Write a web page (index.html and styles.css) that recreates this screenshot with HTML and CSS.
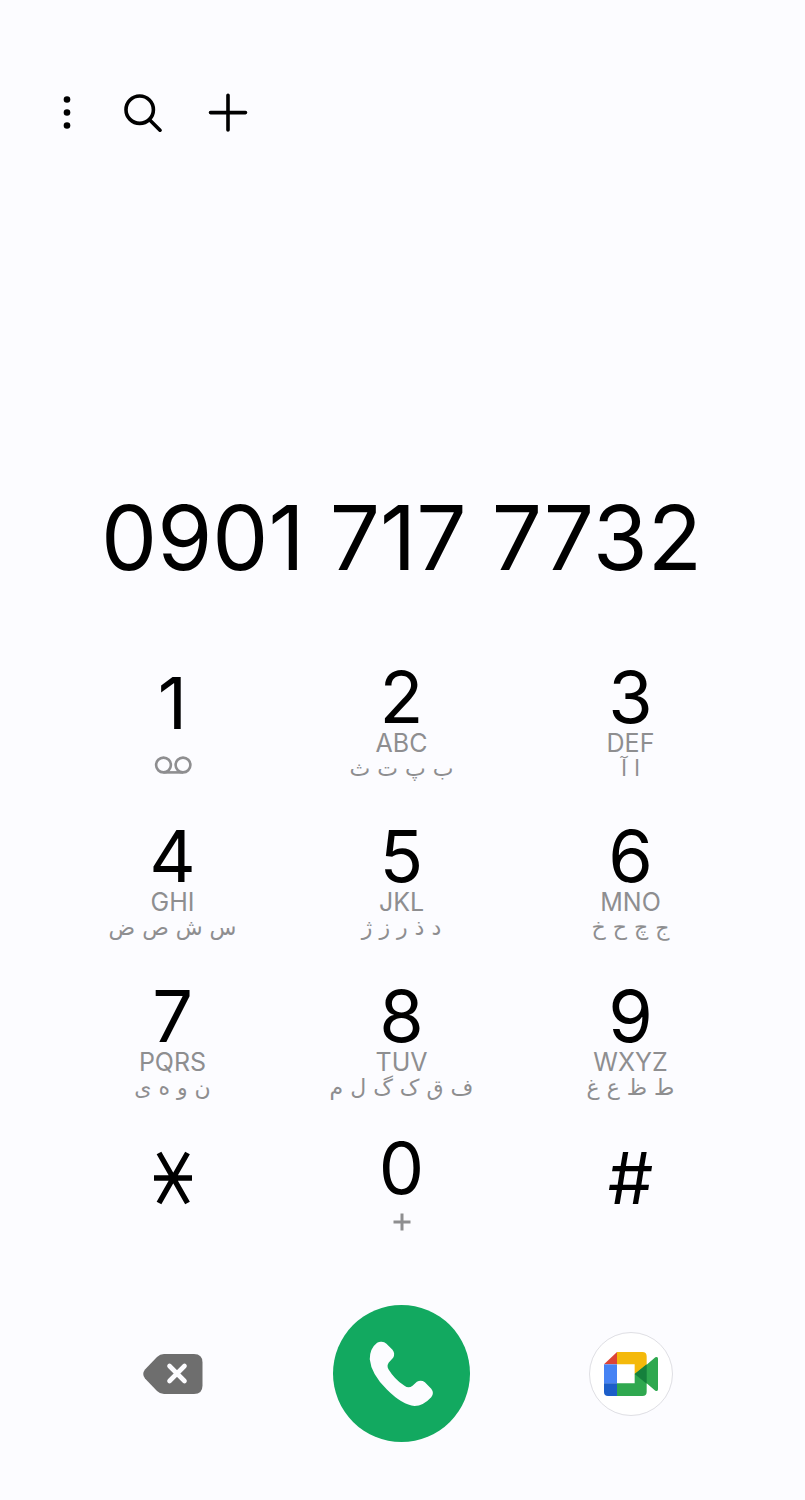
FILE: index.html
```html
<!DOCTYPE html>
<html lang="en">
<head>
    <meta charset="UTF-8">
    <meta name="viewport" content="width=device-width, initial-scale=1">
    <title>Phone</title>
    <link rel="stylesheet" href="styles.css">
</head>
<body>

<header class="toolbar">
    <button class="tool tool-more" type="button" aria-label="More options">
        <svg width="18" height="40" viewBox="0 0 18 40">
            <circle cx="9" cy="6.5" r="3.3"/>
            <circle cx="9" cy="19.5" r="3.3"/>
            <circle cx="9" cy="32.5" r="3.3"/>
        </svg>
    </button>
    <button class="tool" type="button" aria-label="Search">
        <svg class="line" width="40" height="40" viewBox="0 0 40 40">
            <circle cx="17.7" cy="16.7" r="13.7"/>
            <path d="M27.5 26.700 L38 37.200"/>
        </svg>
    </button>
    <button class="tool" type="button" aria-label="Add to contacts">
        <svg class="line" width="40" height="40" viewBox="0 0 40 40">
            <path d="M2.500 19.600 H37.500 M20 2.200 V37"/>
        </svg>
    </button>
</header>

<main>
    <input class="number" type="tel" aria-label="Phone number" value="0901 717 7732" spellcheck="false" autocomplete="off">

    <div class="keypad">
        <button class="key key-one" type="button">
            <span class="digit">1</span>
            <svg class="voicemail" width="38" height="18" viewBox="0 0 38 18" aria-label="Voicemail">
                <circle cx="9.5" cy="9" r="7.4"/>
                <circle cx="29" cy="9" r="7.4"/>
                <path d="M9.5 16.4 H29"/>
            </svg>
        </button>
        <button class="key" type="button">
            <span class="digit">2</span>
            <span class="latin">ABC</span>
            <span class="persian" lang="fa" dir="rtl">ب پ ت ث</span>
        </button>
        <button class="key" type="button">
            <span class="digit">3</span>
            <span class="latin">DEF</span>
            <span class="persian" lang="fa" dir="rtl">ا آ</span>
        </button>
        <button class="key" type="button">
            <span class="digit">4</span>
            <span class="latin">GHI</span>
            <span class="persian" lang="fa" dir="rtl">س ش ص ض</span>
        </button>
        <button class="key" type="button">
            <span class="digit">5</span>
            <span class="latin">JKL</span>
            <span class="persian" lang="fa" dir="rtl">د ذ ر ز ژ</span>
        </button>
        <button class="key" type="button">
            <span class="digit">6</span>
            <span class="latin">MNO</span>
            <span class="persian" lang="fa" dir="rtl">ج چ ح خ</span>
        </button>
        <button class="key" type="button">
            <span class="digit">7</span>
            <span class="latin">PQRS</span>
            <span class="persian" lang="fa" dir="rtl">ن و ه ی</span>
        </button>
        <button class="key" type="button">
            <span class="digit">8</span>
            <span class="latin">TUV</span>
            <span class="persian" lang="fa" dir="rtl">ف ق ک گ ل م</span>
        </button>
        <button class="key" type="button">
            <span class="digit">9</span>
            <span class="latin">WXYZ</span>
            <span class="persian" lang="fa" dir="rtl">ط ظ ع غ</span>
        </button>
        <button class="key key-symbol" type="button" aria-label="Star">
            <svg class="star" width="40" height="66" viewBox="0 0 40 66">
                <path d="M1 33 H39 M6 8 L34.500 58 M34.500 8 L6 58"/>
            </svg>
        </button>
        <button class="key" type="button">
            <span class="digit">0</span>
            <svg class="plus" width="18" height="42" viewBox="0 0 18 42" aria-label="Plus">
                <path d="M0.500 21 H17.500 M9 12.500 V29.500"/>
            </svg>
        </button>
        <button class="key key-symbol" type="button">
            <span class="digit">#</span>
        </button>
    </div>

    <div class="actions">
        <button class="action" type="button" aria-label="Delete">
            <svg width="60" height="40" viewBox="0 0 60 40">
                <path fill="#6e6e6e" d="M21 0 H51 Q59.500 0 59.500 8.500 V31.500 Q59.500 40 51 40 H21 Q17 40 14 37 L2 24.500 Q-1.500 20 2 15.500 L14 3 Q17 0 21 0 Z"/>
                <path fill="none" stroke="#fcfcff" stroke-width="4.600" stroke-linecap="round" d="M26.500 12 L41.500 27 M41.500 12 L26.500 27"/>
            </svg>
        </button>
        <button class="action call" type="button" aria-label="Call">
            <svg width="137" height="137" viewBox="612 46 410 410">
                <path fill="#fcfcff" d="M755 156 Q765 155 772 162 L790 180 Q799 191 792 204 L779 218 Q772 228 778 238 Q796 268 826 288 Q838 297 850 288 L863 276 Q875 269 887 277 L906 297 Q916 310 906 322 Q882 348 856 348 Q820 346 774 300 Q726 252 722 208 Q722 176 744 159 Q750 156 755 156 Z"/>
            </svg>
        </button>
        <button class="action meet" type="button" aria-label="Google Meet">
            <svg width="54" height="44" viewBox="102 126 162 132">
                <path fill="#dc4437" d="M102 163 L141 126 V163 Z"/>
                <path fill="#f4b90b" d="M141 126 H217 Q230 126 230 139 V192 H194 V163 H141 Z"/>
                <path fill="#4683f4" d="M102 163 H141 V220 H102 Z"/>
                <path fill="#1c5ec9" d="M102 220 H141 V258 H114 Q102 258 102 246 Z"/>
                <path fill="#2fa84f" d="M141 220 H194 V192 H230 V246 Q230 258 217 258 H141 Z"/>
                <path fill="#2fa84f" d="M194 192 L230 164 L256 142 Q264 138 264 146 V238 Q264 246 256 242 L230 220 Z"/>
                <path fill="#15803c" d="M194 192 L230 163 V221 Z"/>
            </svg>
        </button>
    </div>
</main>

</body>
</html>
```
FILE: styles.css
```css
body {
    margin: 0;
    padding: 93px 60px 56px 58px;
    font-family: Inter, Roboto, sans-serif;
    color: #000;
    background: #fcfcff;
}

button {
    padding: 0;
    border: none;
    background: none;
    color: inherit;
    font-family: inherit;
    cursor: pointer;
}

svg {
    display: block;
}

.toolbar {
    display: flex;
    gap: 46px;
}

.line {
    fill: none;
    stroke: #000;
    stroke-width: 3.6;
    stroke-linecap: round;
}

.number {
    display: block;
    box-sizing: border-box;
    width: 100%;
    height: 108px;
    margin: 350px 0 73px;
    padding: 0;
    border: none;
    outline: none;
    background: none;
    color: #000;
    font-family: inherit;
    font-size: 89px;
    text-align: center;
}

.keypad {
    display: grid;
    grid-template-columns: repeat(3, 1fr);
    grid-template-rows: 159px 160px 152px auto;
}

.key {
    display: flex;
    flex-direction: column;
    align-items: center;
    justify-content: flex-start;
}

.key-one {
    padding-top: 6px;
}

.key-symbol {
    padding-top: 10px;
}

.digit {
    font-size: 72px;
    line-height: 66px;
}

.latin {
    color: #8e8e90;
    font-size: 25px;
    line-height: 26px;
}

.persian {
    color: #8e8e90;
    font-family: "DejaVu Sans", sans-serif;
    font-size: 22px;
    line-height: 26px;
}

.voicemail {
    margin-top: 20px;
    fill: none;
    stroke: #8e8e90;
    stroke-width: 2.6;
}

.star {
    fill: none;
    stroke: #000;
    stroke-width: 5.4;
}

.plus {
    fill: none;
    stroke: #8e8e90;
    stroke-width: 3;
}

.actions {
    display: grid;
    grid-template-columns: repeat(3, 1fr);
    align-items: center;
    justify-items: center;
    margin-top: 62px;
}

.call {
    border-radius: 50%;
    background: #12a960;
}

.meet {
    display: flex;
    align-items: center;
    justify-content: center;
    width: 84px;
    height: 84px;
    border: 1px solid #dfdfe4;
    border-radius: 50%;
    background: #fff;
}
```
